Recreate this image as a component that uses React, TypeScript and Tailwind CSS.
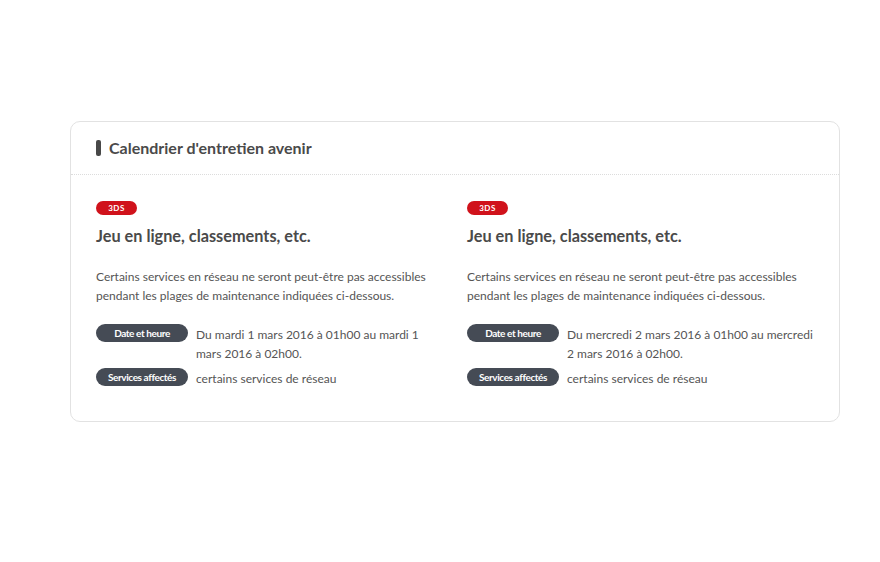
const items = [
  {
    platform: "3DS",
    title: "Jeu en ligne, classements, etc.",
    text: "Certains services en réseau ne seront peut-être pas accessibles pendant les plages de maintenance indiquées ci-dessous.",
    date: "Du mardi 1 mars 2016 à 01h00 au mardi 1 mars 2016 à 02h00.",
    services: "certains services de réseau",
  },
  {
    platform: "3DS",
    title: "Jeu en ligne, classements, etc.",
    text: "Certains services en réseau ne seront peut-être pas accessibles pendant les plages de maintenance indiquées ci-dessous.",
    date: "Du mercredi 2 mars 2016 à 01h00 au mercredi 2 mars 2016 à 02h00.",
    services: "certains services de réseau",
  },
];

function Label({ children }: { children: string }) {
  return (
    <span className="flex h-[18px] w-[92px] shrink-0 items-center justify-center rounded-full bg-[#454b55] text-[10px] font-bold tracking-[-0.4px] text-white">
      {children}
    </span>
  );
}

export default function App() {
  return (
    <div className="min-h-[562px] bg-white pt-[121px] font-['Lato',sans-serif] text-[#555]">
      <div className="mx-[70px] w-[770px] rounded-[10px] border border-[#e2e2e2] bg-white">
        <div className="flex h-[53px] items-center gap-[8px] border-b border-dotted border-[#dcdcdc] px-[25px]">
          <span className="h-[16px] w-[5px] rounded-[2px] bg-[#484848]" />
          <h2 className="text-[16px] font-bold text-[#4a4a4a]">Calendrier d'entretien avenir</h2>
        </div>
        <div className="grid grid-cols-[346px_1fr] gap-[25px] pt-[26px] pr-[20px] pb-[33px] pl-[25px]">
          {items.map((item, i) => (
            <div key={i}>
              <span className="flex h-[14px] w-[41px] items-center justify-center rounded-full bg-[#d0121b] text-[8px] font-bold tracking-[0.5px] text-white">
                {item.platform}
              </span>
              <h3 className="mt-[11px] text-[16.3px] leading-[20px] font-bold text-[#4a4a4a]">{item.title}</h3>
              <p className="mt-[21px] text-[12px] leading-[19px]">{item.text}</p>
              <div className="mt-[19px] flex gap-[8px]">
                <Label>Date et heure</Label>
                <p className="pt-[1px] text-[12px] leading-[19px]">{item.date}</p>
              </div>
              <div className="mt-[5px] flex gap-[8px]">
                <Label>Services affectés</Label>
                <p className="pt-[1px] text-[12px] leading-[19px]">{item.services}</p>
              </div>
            </div>
          ))}
        </div>
      </div>
    </div>
  );
}
